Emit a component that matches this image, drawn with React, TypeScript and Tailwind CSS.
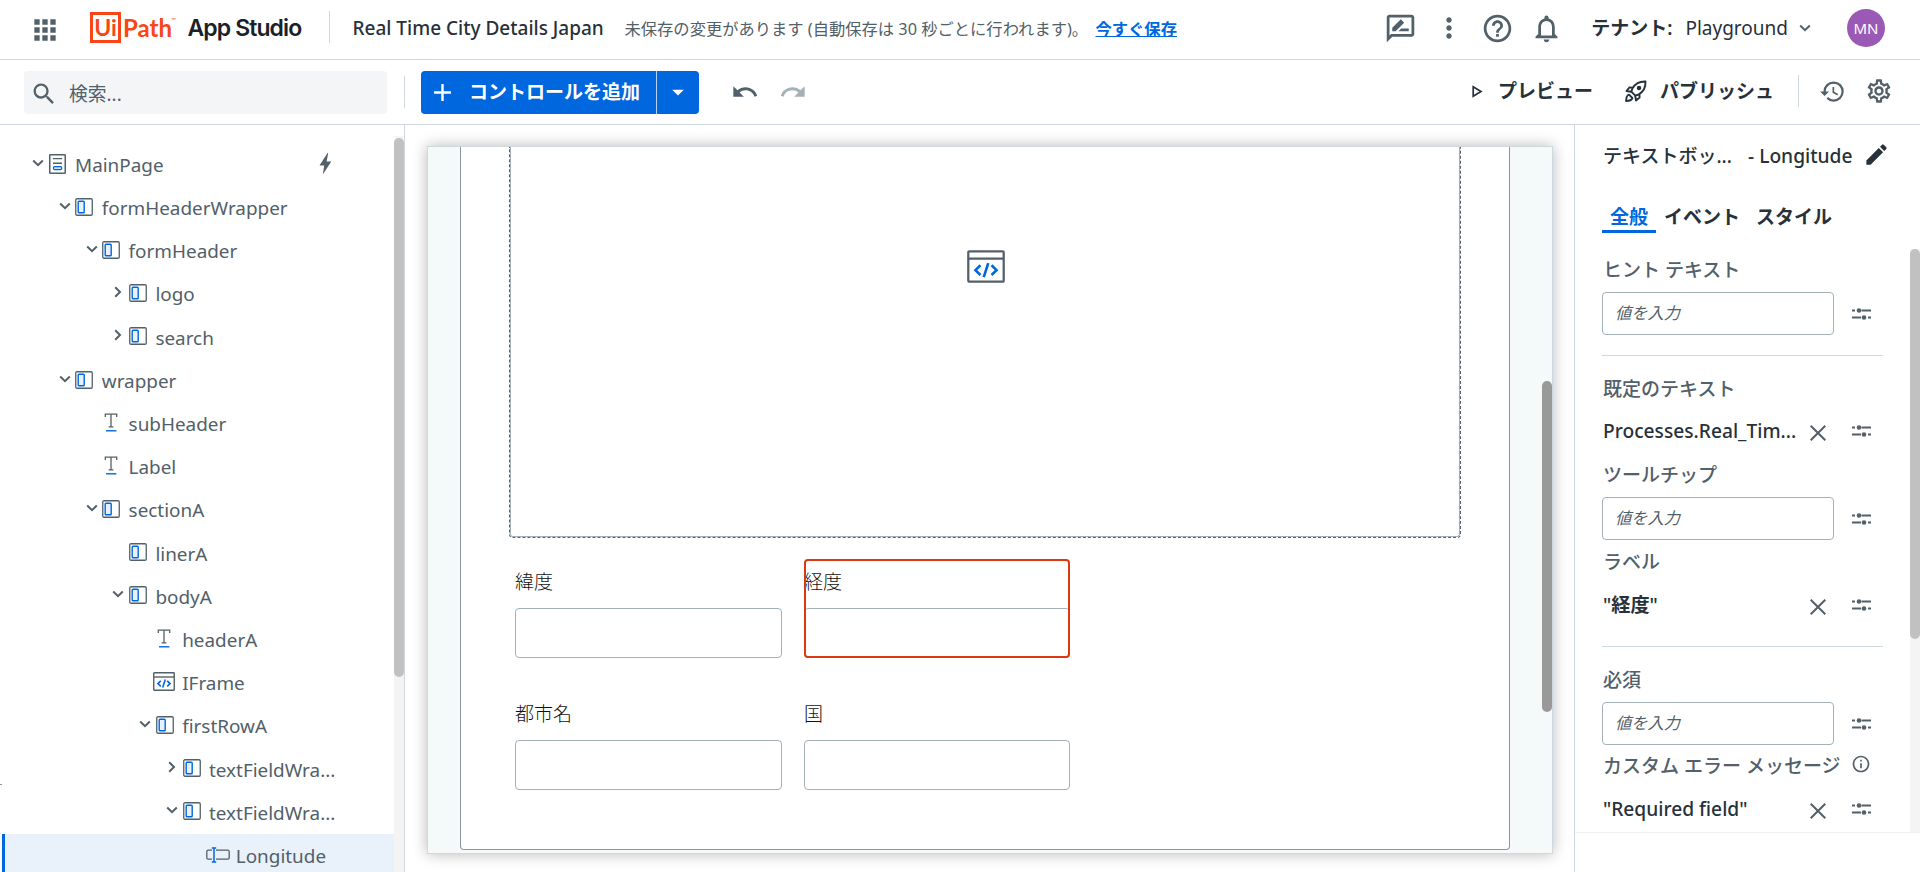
import { ReactNode } from 'react';
import {
  MdAdd,
  MdApps,
  MdArrowDropDown,
  MdEdit,
  MdHelpOutline,
  MdHistory,
  MdInfoOutline,
  MdMoreVert,
  MdNotificationsNone,
  MdOutlineRateReview,
  MdOutlineSettings,
  MdRedo,
  MdSearch,
  MdUndo,
} from 'react-icons/md';

type IconKind = 'page' | 'container' | 'text' | 'iframe' | 'textbox';

interface TreeNode {
  label: string;
  level: number;
  icon: IconKind;
  state?: 'open' | 'closed';
  selected?: boolean;
}

const nodes: TreeNode[] = [
  { label: 'MainPage', level: 0, icon: 'page', state: 'open' },
  { label: 'formHeaderWrapper', level: 1, icon: 'container', state: 'open' },
  { label: 'formHeader', level: 2, icon: 'container', state: 'open' },
  { label: 'logo', level: 3, icon: 'container', state: 'closed' },
  { label: 'search', level: 3, icon: 'container', state: 'closed' },
  { label: 'wrapper', level: 1, icon: 'container', state: 'open' },
  { label: 'subHeader', level: 2, icon: 'text' },
  { label: 'Label', level: 2, icon: 'text' },
  { label: 'sectionA', level: 2, icon: 'container', state: 'open' },
  { label: 'linerA', level: 3, icon: 'container' },
  { label: 'bodyA', level: 3, icon: 'container', state: 'open' },
  { label: 'headerA', level: 4, icon: 'text' },
  { label: 'IFrame', level: 4, icon: 'iframe' },
  { label: 'firstRowA', level: 4, icon: 'container', state: 'open' },
  { label: 'textFieldWra...', level: 5, icon: 'container', state: 'closed' },
  { label: 'textFieldWra...', level: 5, icon: 'container', state: 'open' },
  { label: 'Longitude', level: 6, icon: 'textbox', selected: true },
];

function Chevron({ closed = false }: { closed?: boolean }) {
  return (
    <svg width="12" height="12" viewBox="0 0 12 12" fill="none" stroke="#526069" strokeWidth="2">
      {closed ? <path d="M3.2 1.2 8 6 3.2 10.8" /> : <path d="M1.2 3.5 6 8.2 10.8 3.5" />}
    </svg>
  );
}

function IframeIcon({ width, height, stroke }: { width: number; height: number; stroke: number }) {
  return (
    <svg width={width} height={height} viewBox="0 0 22 19" fill="none" preserveAspectRatio="none">
      <rect x="0.75" y="0.75" width="20.5" height="17.5" rx="0.6" stroke="#526069" strokeWidth={stroke} />
      <path d="M1 5h20" stroke="#526069" strokeWidth={stroke} />
      <path d="M7.8 8.8 4.9 11.6l2.9 2.8M14.2 8.8l2.9 2.8-2.9 2.8M12.3 7.6l-2.6 8" stroke="#0067df" strokeWidth={stroke + 0.2} />
    </svg>
  );
}

function NodeIcon({ kind }: { kind: IconKind }) {
  if (kind === 'page') {
    return (
      <svg width="17" height="20" viewBox="0 0 17 20" fill="none">
        <rect x="0.75" y="0.75" width="15.5" height="18.5" rx="0.6" stroke="#526069" strokeWidth="1.5" />
        <path d="M4 4.6h9M4 9.3h9" stroke="#526069" strokeWidth="1.4" />
        <rect x="4.4" y="12.6" width="8.4" height="3" rx="1.4" fill="#cfe2fb" stroke="#0067df" strokeWidth="1.2" />
      </svg>
    );
  }
  if (kind === 'text') {
    return (
      <svg width="14" height="19" viewBox="0 0 14 19" fill="none">
        <path d="M1.3 4V1.2h11.4V4M7 1.2v12.6M4.6 13.8h4.8" stroke="#526069" strokeWidth="1.3" />
        <path d="M2 17.8h10.4" stroke="#0067df" strokeWidth="1.4" />
      </svg>
    );
  }
  if (kind === 'iframe') {
    return <IframeIcon width={22} height={19} stroke={1.4} />;
  }
  if (kind === 'textbox') {
    return (
      <svg width="24" height="16" viewBox="0 0 24 16" fill="none">
        <path
          d="M6 12.2H2.2A1.5 1.5 0 0 1 .8 10.7v-6a1.5 1.5 0 0 1 1.4-1.5H6M10 3.2h11.8a1.4 1.4 0 0 1 1.4 1.5v6a1.5 1.5 0 0 1-1.4 1.5H10"
          stroke="#526069"
          strokeWidth="1.3"
        />
        <path d="M5.8.9h4.4M8 .9v14.2M5.8 15.1h4.4" stroke="#0067df" strokeWidth="1.5" />
      </svg>
    );
  }
  return (
    <svg className="ml-px" width="18" height="18" viewBox="0 0 18 18" fill="none">
      <rect x="0.75" y="0.75" width="16.5" height="16.5" rx="1.2" stroke="#526069" strokeWidth="1.3" />
      <rect x="3.2" y="3.2" width="6" height="11.6" rx="0.8" fill="#e9f1fa" stroke="#0067df" strokeWidth="1.4" />
    </svg>
  );
}

function TreeRow({ node }: { node: TreeNode }) {
  return (
    <div className={`flex h-[43.2px] shrink-0 items-center ${node.selected ? 'border-l-3 border-[#0067df] bg-[#e9f1fa]' : 'border-l-3 border-transparent'}`}>
      <div style={{ width: 27 + node.level * 26.8 }} className="shrink-0" />
      <div className="mb-[3px] w-3.5">{node.state && <Chevron closed={node.state === 'closed'} />}</div>
      <div className="flex w-[22px] shrink-0 justify-center pb-px">
        <div className="shrink-0">
          <NodeIcon kind={node.icon} />
        </div>
      </div>
      <span className="ml-[7px] pt-0.5">{node.label}</span>
      {node.level === 0 && (
        <svg className="mr-[62px] ml-auto" width="13" height="22" viewBox="0 0 13 22" fill="#526069">
          <path d="M8.5 0 .5 12.5h4.7L3.8 21.5 12.3 8.6H7.6L9.2 0z" />
        </svg>
      )}
    </div>
  );
}

function SlidersIcon() {
  return (
    <svg className="shrink-0" width="20" height="14" viewBox="0 0 20 14" fill="#526069">
      <path d="M0 2.5h3v2H0zM9.5 2.5H19v2H9.500zM0 9.500h9v2H0zM16 9.500h3v2h-3z" />
      <circle cx="7" cy="3.5" r="2.3" />
      <circle cx="12" cy="10.5" r="2.3" />
    </svg>
  );
}

function RocketIcon() {
  return (
    <svg width="22" height="22" viewBox="0 0 22 22" fill="none" stroke="#273139" strokeWidth="1.9" strokeLinejoin="round">
      <path d="M20.5 1.5c-6-.3-9.8 1.6-13 6.8l-1.2 3.4 4 4 3.4-1.2c5.2-3.2 7.1-7 6.8-13z" />
      <path d="M8 7.6 4.5 7.4 1.5 11l4.7.8M14.4 14l.2 3.5-3.6 3-.8-4.7" />
      <path d="M4 14.6C1.9 15 1.2 17 1.1 21c3.9-.1 5.900-.9 6.300-3z" />
      <circle cx="14" cy="8" r="1.3" fill="#273139" />
    </svg>
  );
}

function Field({ label }: { label: string }) {
  return (
    <div>
      <div className="flex h-[54px] items-center pt-0.5 text-[19px] font-light text-[#111]">{label}</div>
      <div className="h-[50px] rounded-[4px] border border-[#a4b1b8] bg-white" />
    </div>
  );
}

function PropLabel({ children }: { children: ReactNode }) {
  return <div className="flex h-7 items-center pl-px font-medium whitespace-nowrap text-[#526069]">{children}</div>;
}

function EmptyInput() {
  return (
    <div className="flex items-center justify-between pr-[11px]">
      <div className="flex h-[43px] w-[232px] items-center rounded-[4px] border border-[#a4b1b8] pl-3 text-[16.3px] text-[#526069] italic">
        値を入力
      </div>
      <SlidersIcon />
    </div>
  );
}

function BoundValue({ children }: { children: ReactNode }) {
  return (
    <div className="flex h-8 items-center pr-[11px] pl-px">
      <span className="flex-1 text-[19.2px] font-medium whitespace-nowrap text-[#273139]">{children}</span>
      <svg className="mt-1 mr-[26px]" width="16" height="16" viewBox="0 0 16 16" stroke="#526069" strokeWidth="2">
        <path d="M.7.7l14.6 14.6M15.3.7.7 15.3" />
      </svg>
      <SlidersIcon />
    </div>
  );
}

function Header() {
  return (
    <header className="flex h-[60px] shrink-0 items-center border-b border-[#cfd8dd] pl-[29px]">
      <MdApps className="mt-px shrink-0 text-[32px] text-[#526069]" />
      <div className="mb-1 ml-[29px] flex h-[31px] items-center font-[Lato] text-[24px] text-[#fa4616]">
        <span className="flex h-[31px] w-[31px] items-center justify-center border-[3px] border-[#fa4616] text-[23px] font-bold">Ui</span>
        <span className="ml-0.5 w-[48px] font-bold">Path</span>
        <span className="mb-4 text-[6px]">™</span>
      </div>
      <span className="ml-3 w-[115px] pb-[3px] font-[Inter] text-[23px] font-semibold tracking-[-0.9px] whitespace-nowrap text-[#1b2127]">App Studio</span>
      <div className="mr-[23px] mb-1.5 ml-[26px] h-8 w-px bg-[#cfd8dd]" />
      <span className="w-[272px] pb-0.5 text-[19px] font-medium whitespace-nowrap">Real Time City Details Japan</span>
      <span className="w-[471px] text-[16.3px] whitespace-nowrap text-[#526069]">未保存の変更があります (自動保存は 30 秒ごとに行われます)。</span>
      <span className="text-[16.3px] font-bold whitespace-nowrap text-[#0067df] underline">今すぐ保存</span>
      <div className="ml-auto flex items-center pr-[35px] pb-[3px] text-[#526069]">
        <MdOutlineRateReview className="text-[33px]" />
        <MdMoreVert className="ml-4 text-[32px]" />
        <MdHelpOutline className="ml-4 text-[33px]" />
        <MdNotificationsNone className="ml-4 text-[33px]" />
        <span className="ml-7 text-[19px] font-semibold whitespace-nowrap text-[#273139]">テナント:</span>
        <span className="mr-[11px] ml-[13px] pt-px text-[19px] whitespace-nowrap text-[#273139]">Playground</span>
        <Chevron />
        <div className="ml-9 flex size-[38px] items-center justify-center rounded-full bg-[#9b59b6] text-[15px] text-white">MN</div>
      </div>
    </header>
  );
}

function Toolbar() {
  return (
    <div className="flex h-[65px] shrink-0 items-center border-b border-[#cfd8dd] pl-6">
      <div className="flex h-[43px] w-[363px] items-center rounded-[4px] bg-[#f4f5f7] pl-1.5 text-[#526069]">
        <MdSearch className="mt-1 text-[28px]" />
        <span className="ml-[11px] pt-1 text-[18.8px]">検索...</span>
      </div>
      <div className="mr-4 ml-[17px] h-8 w-px bg-[#cfd8dd]" />
      <div className="flex h-[43px] w-[278px] rounded-[4px] bg-[#0067df] text-white">
        <div className="flex w-[236px] items-center border-r border-white/70 pl-[7px]">
          <MdAdd className="text-[29px]" />
          <span className="ml-3 text-[19px] font-semibold whitespace-nowrap">コントロールを追加</span>
        </div>
        <div className="flex flex-1 items-center justify-center">
          <MdArrowDropDown className="text-[28px]" />
        </div>
      </div>
      <MdUndo className="ml-8 text-[28px] text-[#526069]" />
      <MdRedo className="ml-5 text-[28px] text-[#a4b1b8]" />
      <div className="ml-auto flex items-center pr-[27px] pb-0.5 text-[#526069]">
        <svg width="11" height="13" viewBox="0 0 11 13" fill="none" stroke="#273139" strokeWidth="1.7">
          <path d="M1.2 1.7v9.6L9 6.5z" />
        </svg>
        <span className="ml-[15px] text-[19px] font-semibold whitespace-nowrap text-[#273139]">プレビュー</span>
        <div className="mr-[13px] ml-8">
          <RocketIcon />
        </div>
        <span className="text-[19px] font-semibold whitespace-nowrap text-[#273139]">パブリッシュ</span>
        <div className="mr-5 ml-6 h-8 w-px bg-[#cfd8dd]" />
        <MdHistory className="text-[27px]" />
        <MdOutlineSettings className="ml-[19px] text-[28px]" />
      </div>
    </div>
  );
}

function Canvas() {
  return (
    <main className="flex-1 pt-[21px] pl-[22px]">
      <div className="relative h-[708px] w-[1126px] overflow-hidden border border-[#cfd8dd] bg-[#f4f9fa] px-8 shadow-[0_0_14px_rgba(0,0,0,0.28)]">
        <div className="h-[703px] w-[1050px] rounded-b-[4px] border border-t-0 border-[#8a97a0] bg-white px-12">
          <div className="h-[391px] w-[952px] rounded-b-[4px] border border-t-0 border-dashed border-[#526069]">
            <div className="flex h-full justify-center rounded-b-[3px] border border-t-0 border-[#a4b1b8] pt-[103px] pl-px">
              <IframeIcon width={38} height={33} stroke={1.3} />
            </div>
          </div>
          <div className="mt-4 ml-1.5 grid w-[555px] grid-cols-[267px_266px] gap-x-[22px] gap-y-[28px]">
            <Field label="緯度" />
            <div className="relative">
              <Field label="経度" />
              <div className="absolute top-[5px] left-0 h-[99px] w-full rounded-[4px] border-2 border-[#dc3911]" />
            </div>
            <Field label="都市名" />
            <Field label="国" />
          </div>
        </div>
        <div className="absolute top-[234px] right-0 h-[331px] w-2.5 rounded-full bg-[#999]" />
      </div>
    </main>
  );
}

function Properties() {
  return (
    <aside className="flex w-[346px] shrink-0 flex-col border-l border-[#cfd8dd] text-[19px] text-[#273139]">
      <div className="flex h-[62px] items-center pl-[28px] font-medium whitespace-nowrap">
        <span className="w-[145px]">テキストボッ...</span>
        <span className="w-[115px] text-[19.2px]">- Longitude</span>
        <MdEdit className="mb-1 text-[27px]" />
      </div>
      <div className="flex h-[62px] pt-[13px] pl-[27px] font-semibold whitespace-nowrap">
        <div className="flex h-[33px] w-[54px] items-center justify-center border-b-3 border-[#0067df] pt-1 text-[#0067df]">全般</div>
        <div className="ml-2 flex h-[34px] items-center pt-px">イベント</div>
        <div className="ml-4 flex h-[34px] items-center pt-px">スタイル</div>
      </div>
      <div className="flex h-[584px] justify-between border-b border-[#f0f2f3]">
        <div className="ml-[27px] w-[281px] pt-[7px]">
          <PropLabel>ヒント テキスト</PropLabel>
          <div className="mt-2">
            <EmptyInput />
          </div>
          <div className="mt-5 mb-[19px] h-px bg-[#cfd8dd]" />
          <PropLabel>既定のテキスト</PropLabel>
          <div className="mt-3">
            <BoundValue>Processes.Real_Tim...</BoundValue>
          </div>
          <div className="mt-3.5" />
          <PropLabel>ツールチップ</PropLabel>
          <div className="mt-2">
            <EmptyInput />
          </div>
          <div className="mt-2" />
          <PropLabel>ラベル</PropLabel>
          <div className="mt-[13px]">
            <BoundValue>
              "<span className="font-bold">経度</span>"
            </BoundValue>
          </div>
          <div className="mt-[25px] mb-[19px] h-px bg-[#cfd8dd]" />
          <PropLabel>必須</PropLabel>
          <div className="mt-2">
            <EmptyInput />
          </div>
          <div className="mt-[7px] flex items-start justify-between pr-3">
            <PropLabel>カスタム エラー メッセージ</PropLabel>
            <MdInfoOutline className="mt-0.5 text-[20px] text-[#526069]" />
          </div>
          <div className="mt-[13px]">
            <BoundValue>"Required field"</BoundValue>
          </div>
        </div>
        <div className="w-2.5 bg-[#f4f4f4]">
          <div className="h-[390px] rounded-full bg-[#c1c1c1]" />
        </div>
      </div>
    </aside>
  );
}

function App() {
  return (
    <div className="relative flex h-[872px] w-[1920px] flex-col overflow-hidden bg-white font-['Noto_Sans','Noto_Sans_CJK_JP',sans-serif] text-[#273139]">
      <Header />
      <Toolbar />
      <div className="flex min-h-0 flex-1">
        <aside className="flex w-[405px] shrink-0 overflow-hidden border-r border-[#cfd8dd]">
          <div className="flex w-[394px] flex-col pt-[17.5px] pl-0.5 text-[18.9px] text-[#526069]">
            {nodes.map((node, index) => (
              <TreeRow key={index} node={node} />
            ))}
          </div>
          <div className="mt-[11px] w-2.5 bg-[#f4f4f4] pt-0.5">
            <div className="h-[539px] rounded-full bg-[#c1c1c1]" />
          </div>
        </aside>
        <Canvas />
        <Properties />
      </div>
      {/* edge of the collapsed drawer handle */}
      <div className="absolute top-[784px] left-0 h-px w-0.5 bg-[#8a97a0]" />
    </div>
  );
}

export default App;
